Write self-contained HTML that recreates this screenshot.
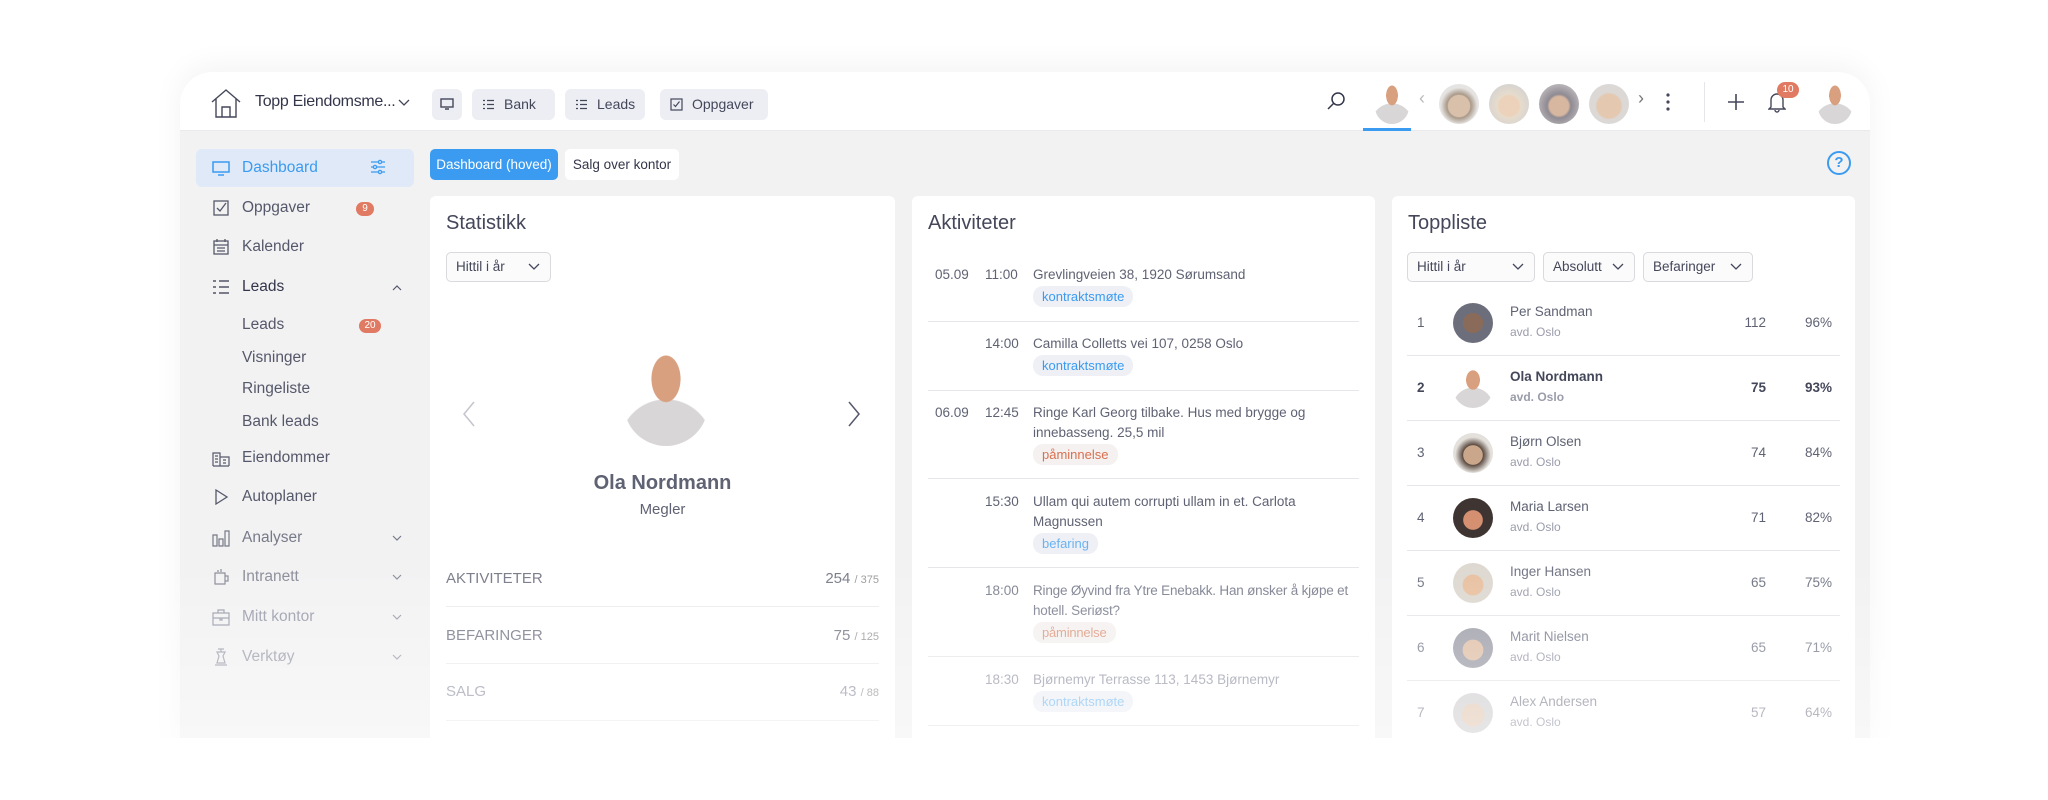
<!DOCTYPE html>
<html><head><meta charset="utf-8"><style>
*{box-sizing:border-box;margin:0;padding:0}
body{width:2048px;height:800px;background:#fff;font-family:"Liberation Sans",sans-serif;color:#55586a;position:relative;overflow:hidden}
.abs{position:absolute}
.frame{left:180px;top:72px;width:1690px;height:680px;background:#f2f2f3;border-radius:32px 32px 0 0;box-shadow:0 -6px 30px rgba(0,0,0,.05);overflow:hidden}
.hdr{left:0;top:0;width:1690px;height:59px;background:#fff;border-bottom:1px solid #e9e9ee}
.tab{top:17px;height:31px;background:#eceef4;border-radius:6px;font-size:14px;line-height:31px;color:#44475a;padding-left:14px}
.av{border-radius:50%;overflow:hidden}
.side{font-size:15.5px;color:#55586a}
.si{position:absolute;left:62px}
.ico{position:absolute;left:32px;width:18px;height:18px}
.chev{position:absolute;left:212px;width:10px;height:10px}
.badge{position:absolute;background:#e07a62;color:#fff;font-size:10px;border-radius:9px;text-align:center;line-height:14px;height:14px}
.card{background:#fff;border-radius:6px;top:124px;height:600px}
.ct{position:absolute;left:16px;top:16px;font-size:20px;color:#44475a}
.dd{position:absolute;height:30px;border:1px solid #d9d9de;border-radius:5px;background:#fbfbfc;font-size:13.5px;color:#44475a;line-height:28px;padding-left:9px}
.dd svg{position:absolute;right:10px;top:10px}
.srow{position:absolute;left:16px;right:16px;height:1px;background:#ececef}
.slab{position:absolute;left:16px;font-size:15px;color:#777a88}
.sval{position:absolute;right:16px;font-size:15px;color:#777a88}
.sval small{font-size:11px;color:#999}
.ar{position:absolute;font-size:13.5px;color:#5f6273;line-height:20px}
.tag{display:inline-block;font-size:13px;padding:0 9px;border-radius:10px;background:#eef0f6;color:#3a9bf0;line-height:21px;margin-top:1px}
.tag.o{color:#d9704f;background:#f4f1f0}
.line{position:absolute;left:16px;right:16px;height:1px;background:#e6e6ea}
.tr{position:absolute;left:0;width:463px;height:65px;font-size:13.5px;color:#5f6273}
.tr .r{position:absolute;left:25px;top:25px}
.tr .a{position:absolute;left:61px;top:13px;width:40px;height:40px;border-radius:50%}
.tr .n{position:absolute;left:118px;top:14px;font-size:13.5px}
.tr .o{position:absolute;left:118px;top:35px;font-size:12px;color:#9a9caa}
.tr .v{position:absolute;right:89px;top:25px}
.tr .p{position:absolute;right:23px;top:25px}
.fade{left:0;width:2048px;background:linear-gradient(rgba(255,255,255,0),rgba(255,255,255,.45));}
</style></head><body>
<div class="abs frame">
 <div class="abs hdr">
  <svg class="abs" style="left:30px;top:16px" width="32" height="30" viewBox="0 0 32 30" fill="none" stroke="#44475a" stroke-width="1.4"><path d="M2 14 L16 2 L30 14 M6 11 V29 H26 V11 M12 29 V19 H20 V29"/></svg>
  <div class="abs" style="left:75px;top:21px;font-size:16px;color:#33364a;letter-spacing:-0.3px">Topp Eiendomsme...</div>
  <svg class="abs" style="left:218px;top:27px" width="12" height="8" viewBox="0 0 12 8" fill="none" stroke="#44475a" stroke-width="1.3"><path d="M1 1l5 5 5-5"/></svg>
  <div class="abs tab" style="left:252px;width:30px;padding:0"><svg style="position:absolute;left:8px;top:9px" width="14" height="12" viewBox="0 0 14 12" fill="none" stroke="#44475a" stroke-width="1.4"><rect x="1" y="1" width="12" height="8"/><path d="M5 11h4"/></svg></div>
  <div class="abs tab" style="left:292px;width:83px;padding-left:32px"><svg style="position:absolute;left:10px;top:10px" width="12" height="11" viewBox="0 0 12 11" fill="none" stroke="#44475a" stroke-width="1.2"><path d="M1 1.5h2M1 5.5h2M1 9.5h2M5 1.5h7M5 5.5h7M5 9.5h7"/></svg>Bank</div>
  <div class="abs tab" style="left:385px;width:80px;padding-left:32px"><svg style="position:absolute;left:10px;top:10px" width="12" height="11" viewBox="0 0 12 11" fill="none" stroke="#44475a" stroke-width="1.2"><path d="M1 1.5h2M1 5.5h2M1 9.5h2M5 1.5h7M5 5.5h7M5 9.5h7"/></svg>Leads</div>
  <div class="abs tab" style="left:480px;width:108px;padding-left:32px"><svg style="position:absolute;left:10px;top:9px" width="13" height="13" viewBox="0 0 13 13" fill="none" stroke="#44475a" stroke-width="1.2"><rect x="1" y="1" width="11" height="11"/><path d="M3.5 6.5l2 2 4-5"/></svg>Oppgaver</div>
  <svg class="abs" style="left:1146px;top:19px" width="20" height="20" viewBox="0 0 20 20" fill="none" stroke="#33364a" stroke-width="1.5"><circle cx="12" cy="8" r="6"/><path d="M8 12l-6 6"/></svg>
  <div class="abs" style="left:1195px;top:10px;width:34px;height:42px;border-radius:0 0 17px 17px;background:radial-gradient(ellipse at 50% 32%,#d9a080 0 24%,transparent 25%),radial-gradient(circle at 50% 100%,#d8d6d6 0 45%,transparent 46%)"></div>
  <div class="abs" style="left:1183px;top:56px;width:48px;height:3px;background:#3a9bf0"></div>
  <div class="abs" style="left:1239px;top:16px;font-size:18px;color:#bbb">‹</div>
  <div class="abs av" style="left:1259px;top:12px;width:40px;height:40px;background:radial-gradient(circle at 50% 55%,#d8c0aa 0 36%,#a89888 40%,#e6e4e2 62%)"></div>
  <div class="abs av" style="left:1309px;top:12px;width:40px;height:40px;background:radial-gradient(circle at 50% 55%,#ecd2ba 0 34%,#e6dccc 40%,#d8d4d0 70%)"></div>
  <div class="abs av" style="left:1359px;top:12px;width:40px;height:40px;background:radial-gradient(circle at 50% 55%,#d7b7a0 0 32%,#8f8a92 40%,#b4b0b4 70%)"></div>
  <div class="abs av" style="left:1409px;top:12px;width:40px;height:40px;background:radial-gradient(circle at 50% 55%,#e4c8b0 0 40%,#dcd8d6 46%)"></div>
  <div class="abs" style="left:1458px;top:16px;font-size:18px;color:#777">›</div>
  <svg class="abs" style="left:1485px;top:20px" width="6" height="20" viewBox="0 0 6 20" fill="#44475a"><circle cx="3" cy="3" r="1.6"/><circle cx="3" cy="10" r="1.6"/><circle cx="3" cy="17" r="1.6"/></svg>
  <div class="abs" style="left:1524px;top:10px;width:1px;height:40px;background:#e5e5ea"></div>
  <svg class="abs" style="left:1547px;top:21px" width="18" height="18" viewBox="0 0 18 18" stroke="#44475a" stroke-width="1.6"><path d="M9 1v16M1 9h16"/></svg>
  <svg class="abs" style="left:1588px;top:19px" width="18" height="22" viewBox="0 0 18 22" fill="none" stroke="#44475a" stroke-width="1.4"><path d="M3 16V9a6 6 0 0112 0v7l2 2H1zM7 19a2 2 0 004 0"/></svg>
  <div class="badge" style="left:1597px;top:10px;width:22px;height:16px;line-height:16px">10</div>
  <div class="abs" style="left:1638px;top:10px;width:34px;height:42px;border-radius:0 0 17px 17px;background:radial-gradient(ellipse at 50% 32%,#d9a080 0 24%,transparent 25%),radial-gradient(circle at 50% 100%,#d8d6d6 0 45%,transparent 46%)"></div>
 </div>
 <!-- sidebar -->
 <div class="abs side" style="left:0;top:59px;width:240px;height:620px">
  <div class="abs" style="left:16px;top:18px;width:218px;height:38px;background:#dfe9f7;border-radius:6px"></div>
  <svg class="ico" style="top:28px" viewBox="0 0 18 18" fill="none" stroke="#3a9bf0" stroke-width="1.5"><rect x="1" y="3" width="16" height="10"/><path d="M6 16h6"/></svg>
  <div class="si" style="top:28px;color:#3a9bf0">Dashboard</div>
  <svg class="abs" style="left:190px;top:28px" width="16" height="16" viewBox="0 0 16 16" fill="none" stroke="#3a9bf0" stroke-width="1.3"><path d="M1 3h14M1 8h14M1 13h14"/><circle cx="10" cy="3" r="1.6" fill="#dfe9f7"/><circle cx="5" cy="8" r="1.6" fill="#dfe9f7"/><circle cx="10" cy="13" r="1.6" fill="#dfe9f7"/></svg>
  <svg class="ico" style="top:68px" viewBox="0 0 18 18" fill="none" stroke="#55586a" stroke-width="1.3"><rect x="2" y="2" width="14" height="14"/><path d="M5 9l3 3 6-8"/></svg>
  <div class="si" style="top:68px">Oppgaver</div><div class="badge" style="left:176px;top:71px;width:18px">9</div>
  <svg class="ico" style="top:107px" viewBox="0 0 18 18" fill="none" stroke="#55586a" stroke-width="1.3"><rect x="2" y="3" width="14" height="13"/><path d="M2 7h14M5 1v3M13 1v3M5 10h8M5 13h8"/></svg>
  <div class="si" style="top:107px">Kalender</div>
  <svg class="ico" style="top:147px" viewBox="0 0 18 18" fill="none" stroke="#33364a" stroke-width="1.3"><path d="M1 3h3M1 9h3M1 15h3M7 3h10M7 9h10M7 15h10"/></svg>
  <div class="si" style="top:147px;color:#33364a">Leads</div>
  <svg class="chev" style="top:152px" viewBox="0 0 10 10" fill="none" stroke="#55586a" stroke-width="1.2"><path d="M1 7l4-4 4 4"/></svg>
  <div class="si" style="top:185px">Leads</div><div class="badge" style="left:179px;top:188px;width:22px">20</div>
  <div class="si" style="top:218px">Visninger</div>
  <div class="si" style="top:249px">Ringeliste</div>
  <div class="si" style="top:282px">Bank leads</div>
  <svg class="ico" style="top:318px" viewBox="0 0 18 18" fill="none" stroke="#55586a" stroke-width="1.2"><path d="M1 17V4h7v13M8 8h9v9M1 17h16M3 7h3M3 10h3M3 13h3M11 11h3M11 14h3"/></svg>
  <div class="si" style="top:318px">Eiendommer</div>
  <svg class="ico" style="top:357px" viewBox="0 0 18 18" fill="none" stroke="#55586a" stroke-width="1.3"><path d="M4 2l11 7-11 7z"/></svg>
  <div class="si" style="top:357px">Autoplaner</div>
  <svg class="ico" style="top:398px" viewBox="0 0 18 18" fill="none" stroke="#777a88" stroke-width="1.2"><path d="M1 6h4v11H1zM7 10h4v7H7zM13 2h4v15h-4z"/></svg>
  <div class="si" style="top:398px;color:#777a88">Analyser</div>
  <svg class="chev" style="top:402px" viewBox="0 0 10 10" fill="none" stroke="#777a88" stroke-width="1.2"><path d="M1 3l4 4 4-4"/></svg>
  <svg class="ico" style="top:437px" viewBox="0 0 18 18" fill="none" stroke="#8a8c98" stroke-width="1.2"><path d="M3 5h10v11H3zM13 8h3v5h-3M6 2v2M9 1v3"/></svg>
  <div class="si" style="top:437px;color:#8a8c98">Intranett</div>
  <svg class="chev" style="top:441px" viewBox="0 0 10 10" fill="none" stroke="#8a8c98" stroke-width="1.2"><path d="M1 3l4 4 4-4"/></svg>
  <svg class="ico" style="top:477px" viewBox="0 0 18 18" fill="none" stroke="#9a9caa" stroke-width="1.2"><path d="M1 5h16v12H1zM6 5V2h6v3M1 10h16M8 10v2h2v-2"/></svg>
  <div class="si" style="top:477px;color:#9a9caa">Mitt kontor</div>
  <svg class="chev" style="top:481px" viewBox="0 0 10 10" fill="none" stroke="#9a9caa" stroke-width="1.2"><path d="M1 3l4 4 4-4"/></svg>
  <svg class="ico" style="top:517px" viewBox="0 0 18 18" fill="none" stroke="#a0a2ae" stroke-width="1.2"><path d="M6 1h6M9 1v3M5 4h8l-2 4 2 7H5l2-7zM3 17h12"/></svg>
  <div class="si" style="top:517px;color:#a0a2ae">Verktøy</div>
  <svg class="chev" style="top:521px" viewBox="0 0 10 10" fill="none" stroke="#a0a2ae" stroke-width="1.2"><path d="M1 3l4 4 4-4"/></svg>
 </div>
 <!-- content tabs -->
 <div class="abs" style="left:250px;top:77px;width:128px;height:31px;background:#3a9bf0;border-radius:5px;color:#fff;font-size:13.5px;line-height:31px;text-align:center">Dashboard (hoved)</div>
 <div class="abs" style="left:385px;top:77px;width:114px;height:31px;background:#fff;border-radius:5px;color:#33364a;font-size:13.5px;line-height:31px;text-align:center">Salg over kontor</div>
 <div class="abs" style="left:1647px;top:79px;width:24px;height:24px;border:2px solid #3a9bf0;border-radius:50%;color:#3a9bf0;font-size:15px;text-align:center;line-height:20px;font-weight:bold">?</div>
 <!-- Statistikk -->
 <div class="abs card" style="left:250px;width:465px">
  <div class="ct">Statistikk</div>
  <div class="dd" style="left:16px;top:56px;width:105px">Hittil i år<svg width="12" height="8" viewBox="0 0 12 8" fill="none" stroke="#44475a" stroke-width="1.3"><path d="M1 1l5 5 5-5"/></svg></div>
  <svg class="abs" style="left:33px;top:205px" width="12" height="26" viewBox="0 0 12 26" fill="none" stroke="#c4c4cc" stroke-width="1.5"><path d="M11 1L1 13l10 12"/></svg>
  <svg class="abs" style="left:418px;top:205px" width="12" height="26" viewBox="0 0 12 26" fill="none" stroke="#55586a" stroke-width="1.5"><path d="M1 1l10 12L1 25"/></svg>
  <div class="abs" style="left:194px;top:154px;width:84px;height:96px;border-radius:0 0 42px 42px;background:radial-gradient(ellipse at 50% 30%,#d9a080 0 24%,transparent 25%),radial-gradient(circle at 50% 100%,#d8d6d6 0 44%,transparent 45%)"></div>
  <div class="abs" style="left:0;width:465px;top:276px;text-align:center;font-size:20px;font-weight:bold;color:#5f6273">Ola Nordmann</div>
  <div class="abs" style="left:0;width:465px;top:305px;text-align:center;font-size:15px;color:#5f6273">Megler</div>
  <div class="slab" style="top:374px">AKTIVITETER</div><div class="sval" style="top:374px">254 <small>/ 375</small></div>
  <div class="srow" style="top:410px"></div>
  <div class="slab" style="top:431px">BEFARINGER</div><div class="sval" style="top:431px">75 <small>/ 125</small></div>
  <div class="srow" style="top:467px"></div>
  <div class="slab" style="top:487px;color:#9a9caa">SALG</div><div class="sval" style="top:487px;color:#9a9caa">43 <small>/ 88</small></div>
  <div class="srow" style="top:524px"></div>
 </div>
 <!-- Aktiviteter -->
 <div class="abs card" style="left:732px;width:463px">
  <div class="ct">Aktiviteter</div>
  <div class="ar" style="left:23px;top:69px">05.09</div><div class="ar" style="left:73px;top:69px">11:00</div>
  <div class="ar" style="left:121px;top:69px">Grevlingveien 38, 1920 Sørumsand<br><span class="tag">kontraktsmøte</span></div>
  <div class="line" style="top:125px"></div>
  <div class="ar" style="left:73px;top:138px">14:00</div>
  <div class="ar" style="left:121px;top:138px">Camilla Colletts vei 107, 0258 Oslo<br><span class="tag">kontraktsmøte</span></div>
  <div class="line" style="top:194px"></div>
  <div class="ar" style="left:23px;top:207px">06.09</div><div class="ar" style="left:73px;top:207px">12:45</div>
  <div class="ar" style="left:121px;top:207px;width:300px">Ringe Karl Georg tilbake. Hus med brygge og innebasseng. 25,5 mil<br><span class="tag o">påminnelse</span></div>
  <div class="line" style="top:282px"></div>
  <div class="ar" style="left:73px;top:296px">15:30</div>
  <div class="ar" style="left:121px;top:296px;width:300px">Ullam qui autem corrupti ullam in et. Carlota Magnussen<br><span class="tag" style="color:#6ab2f2">befaring</span></div>
  <div class="line" style="top:371px"></div>
  <div class="ar" style="left:73px;top:385px;color:#7d8090">18:00</div>
  <div class="ar" style="left:121px;top:385px;width:330px;color:#7d8090;letter-spacing:-0.2px">Ringe Øyvind fra Ytre Enebakk. Han ønsker å kjøpe et hotell. Seriøst?<br><span class="tag o" style="color:#dd9a80">påminnelse</span></div>
  <div class="line" style="top:460px"></div>
  <div class="ar" style="left:73px;top:474px;color:#9a9caa">18:30</div>
  <div class="ar" style="left:121px;top:474px;color:#9a9caa">Bjørnemyr Terrasse 113, 1453 Bjørnemyr<br><span class="tag" style="color:#80c0f4">kontraktsmøte</span></div>
  <div class="line" style="top:529px"></div>
 </div>
 <!-- Toppliste -->
 <div class="abs card" style="left:1212px;width:463px">
  <div class="ct">Toppliste</div>
  <div class="dd" style="left:15px;top:56px;width:128px">Hittil i år<svg width="12" height="8" viewBox="0 0 12 8" fill="none" stroke="#44475a" stroke-width="1.3"><path d="M1 1l5 5 5-5"/></svg></div>
  <div class="dd" style="left:151px;top:56px;width:92px">Absolutt<svg width="12" height="8" viewBox="0 0 12 8" fill="none" stroke="#44475a" stroke-width="1.3"><path d="M1 1l5 5 5-5"/></svg></div>
  <div class="dd" style="left:251px;top:56px;width:110px">Befaringer<svg width="12" height="8" viewBox="0 0 12 8" fill="none" stroke="#44475a" stroke-width="1.3"><path d="M1 1l5 5 5-5"/></svg></div>
  <div class="tr" style="top:94px"><span class="r">1</span><span class="a" style="background:radial-gradient(circle at 50% 50%,#8a6a58 0 35%,#6c6e7c 36%)"></span><span class="n">Per Sandman</span><span class="o">avd. Oslo</span><span class="v">112</span><span class="p">96%</span></div>
  <div class="line" style="top:159px;left:15px;right:15px"></div>
  <div class="tr" style="top:159px;font-weight:bold;color:#44475a"><span class="r">2</span><span class="a" style="border-radius:0 0 20px 20px;background:radial-gradient(ellipse at 50% 30%,#d9a080 0 24%,transparent 25%),radial-gradient(circle at 50% 100%,#d8d6d6 0 45%,transparent 46%)"></span><span class="n">Ola Nordmann</span><span class="o">avd. Oslo</span><span class="v">75</span><span class="p">93%</span></div>
  <div class="line" style="top:224px;left:15px;right:15px"></div>
  <div class="tr" style="top:224px"><span class="r">3</span><span class="a" style="background:radial-gradient(circle at 50% 55%,#caa68a 0 32%,#5a4a40 34%,#e4e0dc 60%)"></span><span class="n">Bjørn Olsen</span><span class="o">avd. Oslo</span><span class="v">74</span><span class="p">84%</span></div>
  <div class="line" style="top:289px;left:15px;right:15px"></div>
  <div class="tr" style="top:289px"><span class="r">4</span><span class="a" style="background:radial-gradient(circle at 50% 55%,#d49070 0 32%,#3e3432 34%)"></span><span class="n">Maria Larsen</span><span class="o">avd. Oslo</span><span class="v">71</span><span class="p">82%</span></div>
  <div class="line" style="top:354px;left:15px;right:15px"></div>
  <div class="tr" style="top:354px;color:#6f7282"><span class="r">5</span><span class="a" style="background:radial-gradient(circle at 50% 55%,#e8c0a0 0 34%,#ddd8d0 36%)"></span><span class="n">Inger Hansen</span><span class="o">avd. Oslo</span><span class="v">65</span><span class="p">75%</span></div>
  <div class="line" style="top:419px;left:15px;right:15px"></div>
  <div class="tr" style="top:419px;color:#7d8090"><span class="r">6</span><span class="a" style="background:radial-gradient(circle at 50% 55%,#e0c0a8 0 34%,#9fa0aa 36%)"></span><span class="n">Marit Nielsen</span><span class="o">avd. Oslo</span><span class="v">65</span><span class="p">71%</span></div>
  <div class="line" style="top:484px;left:15px;right:15px"></div>
  <div class="tr" style="top:484px;color:#8a8c98"><span class="r">7</span><span class="a" style="background:radial-gradient(circle at 50% 55%,#e4cbb8 0 38%,#d4d2d4 40%)"></span><span class="n">Alex Andersen</span><span class="o">avd. Oslo</span><span class="v">57</span><span class="p">64%</span></div>
 </div>
</div>
<div class="abs" style="left:0;top:738px;width:2048px;height:62px;background:#fff"></div>
<div class="abs fade" style="top:560px;height:178px"></div>
</body></html>
